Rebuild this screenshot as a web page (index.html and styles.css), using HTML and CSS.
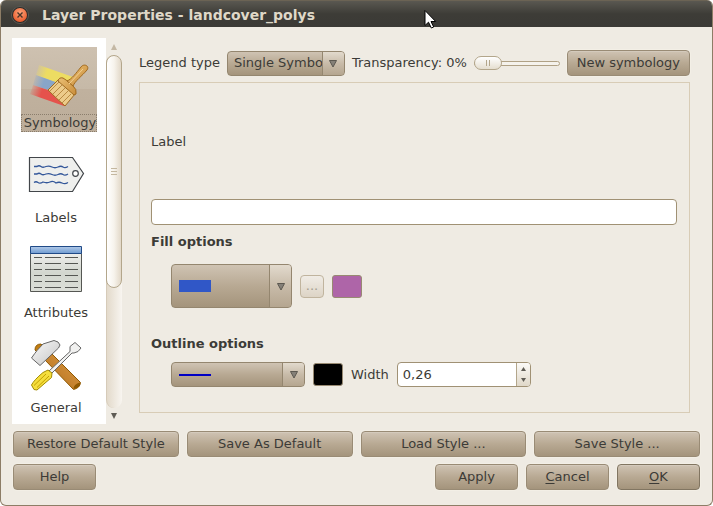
FILE: index.html
```html
<!DOCTYPE html>
<html lang="en">
<head>
<meta charset="utf-8">
<title>Layer Properties - landcover_polys</title>
<link rel="stylesheet" href="styles.css">
</head>
<body>
<div class="window">
  <header class="titlebar">
    <button class="close" type="button" aria-label="Close">
      <svg width="18" height="18" viewBox="0 0 18 18">
        <defs><radialGradient id="orb" cx=".5" cy=".35" r=".6"><stop offset="0" stop-color="#ffa67c"/><stop offset="1" stop-color="#ea5f31"/></radialGradient></defs>
        <circle cx="9" cy="9" r="8.5" fill="#2c2a27" stroke="#5c5a54"/>
        <circle cx="9" cy="9" r="7" fill="url(#orb)"/>
        <path d="M6.500 6.500l5 5m0-5l-5 5" stroke="#4b3528" stroke-width="1.400"/>
      </svg>
    </button>
    <h1>Layer Properties - landcover_polys</h1>
    <svg class="pointer" width="13" height="20" viewBox="0 0 13 20"><path d="M1 1.500v15l3.500-3.300 2.800 5.800 2.400-1-2.700-5.500h4.700z" fill="#fff" stroke="#000"/></svg>
  </header>

  <main class="content">
    <div class="upper">
      <nav class="pages">
        <a class="page selected" href="#symbology">
          <span class="icon">
            <svg width="60" height="60" viewBox="0 0 60 60">
              <defs>
                <linearGradient id="fy" gradientUnits="userSpaceOnUse" x1="7" y1="14" x2="19" y2="18"><stop offset="0" stop-color="#eddc62" stop-opacity="0"/><stop offset="1" stop-color="#eddc62"/></linearGradient>
                <linearGradient id="fb" gradientUnits="userSpaceOnUse" x1="4" y1="24" x2="16" y2="28"><stop offset="0" stop-color="#88a5c8" stop-opacity="0"/><stop offset="1" stop-color="#88a5c8"/></linearGradient>
                <linearGradient id="fr" gradientUnits="userSpaceOnUse" x1="1" y1="36" x2="13" y2="40"><stop offset="0" stop-color="#e5524c" stop-opacity="0"/><stop offset="1" stop-color="#e5524c"/></linearGradient>
                <linearGradient id="wood" x1="0" y1="0" x2="1" y2="1"><stop offset="0" stop-color="#eabf74"/><stop offset="1" stop-color="#c98d3a"/></linearGradient>
              </defs>
              <path d="M10 14l34 12-4 10L7 24z" fill="url(#fy)"/>
              <path d="M7 24l33 12-3 9L4 34z" fill="url(#fb)"/>
              <path d="M4 34l33 11-2 10L1 43z" fill="url(#fr)"/>
              <path d="M19 39L30 28 46 43 36 55Q27 47 19 39z" fill="#eccb8a" stroke="#a06a20"/>
              <path d="M21 40l9-9M24 43l9-9M27 46l9-9M30 49l9-9M33 52l9-9" stroke="#b98a43"/>
              <path d="M29 30q1-4 5-3l6 4 4 4q4 3 3 8l-2 1z" fill="url(#wood)" stroke="#a06a20"/>
              <path d="M38 30c5-2 9-8 14-14 3-4 9-1 6 3-5 6-12 11-14 16z" fill="url(#wood)" stroke="#a06a20"/>
              <path d="M40 33L54 18" stroke="#f2d091"/>
            </svg>
          </span>
          <span class="name">Symbology</span>
        </a>
        <a class="page" href="#labels">
          <span class="icon">
            <svg width="60" height="60" viewBox="0 0 60 60">
              <path d="M3.500 11.500H46.500L57.500 27.500 46.500 45.500H3.500z" fill="#eeefed" stroke="#42464a" stroke-width="1.200"/>
              <circle cx="49.500" cy="27.500" r="2.800" fill="#fff" stroke="#42464a" stroke-width="1.200"/>
              <path d="M8 20.500h3q2-1.500 4 0t5 0q3-1 6 .5t6 0q3-1.500 5 0t5-.5M8 28h3q2-1.500 4 0t5 0q3-1 6 .5t6 0q3-1.500 5 0t5-.5M8 36.500q2-1.500 4 0t5-.5q4 1.500 7 0t6 1q3-1.500 6 0t6-.5" fill="none" stroke="#33579a" stroke-width="1.300"/>
            </svg>
          </span>
          <span class="name">Labels</span>
        </a>
        <a class="page" href="#attributes">
          <span class="icon">
            <svg width="60" height="60" viewBox="0 0 60 60">
              <defs>
                <linearGradient id="sheet" x1="0" y1="0" x2="0" y2="1"><stop offset="0" stop-color="#eeeeec"/><stop offset=".5" stop-color="#d3d7cf"/><stop offset="1" stop-color="#dcdfd8"/></linearGradient>
                <linearGradient id="head" x1="0" y1="0" x2="0" y2="1"><stop offset="0" stop-color="#b2cae8"/><stop offset="1" stop-color="#6f9bd1"/></linearGradient>
              </defs>
              <path d="M4.500 12.500h51v38h-51z" fill="url(#sheet)" stroke="#555753"/>
              <path d="M4.500 5.500h51v7h-51z" fill="url(#head)" stroke="#204a87"/>
              <path d="M8 16.500h8m3 0h16m4 0h13M8 22.500h8m3 0h16m4 0h13M8 28.500h8m3 0h16m4 0h13M8 34.500h8m3 0h16m4 0h13M8 40.500h8m3 0h16m4 0h13M8 46.500h8m3 0h16m4 0h13" stroke="#555753"/>
            </svg>
          </span>
          <span class="name">Attributes</span>
        </a>
        <a class="page" href="#general">
          <span class="icon">
            <svg width="60" height="60" viewBox="0 0 60 60">
              <defs>
                <linearGradient id="shaft" x1="0" y1="1" x2="1" y2="0"><stop offset="0" stop-color="#b36f1c"/><stop offset="1" stop-color="#dc9a45"/></linearGradient>
                <linearGradient id="steel" x1="0" y1="0" x2="1" y2="1"><stop offset="0" stop-color="#fafafa"/><stop offset="1" stop-color="#c4c4c4"/></linearGradient>
              </defs>
              <path d="M9 14q0-6 6-6l3 4-6 5z" fill="#c17d11" stroke="#8f5902"/>
              <path d="M19 24L26 18 54.500 46.500Q54 52 47.500 53.500z" fill="url(#shaft)" stroke="#8f5902"/>
              <path d="M47.500 53q0-5 6.500-6.500 1 5-6.500 6.500z" fill="#8f5902"/>
              <path d="M5.500 22Q9 17 11 14.500L17 8 28 4.500 32 6 34 9 32.500 12 22 22 14 29.500z" fill="url(#steel)" stroke="#666"/>
              <path d="M23 35L44 15.500V10.500L49 6.500 55 12 52 15.500 48 17 46 17 25.500 37.500z" fill="#f1f1f0" stroke="#666"/>
              <path d="M5.500 49Q8 44 17 36.500L22 34 26 37 25.500 41.500 11 54 8 53.500z" fill="#f5de3c" stroke="#a38b00"/>
              <path d="M8 49.500L20 38M11 51.500L23 40" stroke="#c4a000"/>
            </svg>
          </span>
          <span class="name">General</span>
        </a>
      </nav>
      <div class="scrollbar" aria-hidden="true">
        <svg class="up" width="8" height="6" viewBox="0 0 8 6"><path d="M4 0l3 6H1z"/></svg>
        <div class="track"><div class="thumb"><i></i></div></div>
        <svg class="down" width="8" height="6" viewBox="0 0 8 6"><path d="M4 6L1 0h6z"/></svg>
      </div>

      <section class="panel">
        <div class="toolbar">
          <label for="legend">Legend type</label>
          <span class="combo legend">
            <select id="legend"><option>Single Symbol</option></select>
            <span class="drop"><svg width="10" height="9" viewBox="0 0 10 9"><path d="M1.500 1.500h7L5 8z"/></svg></span>
          </span>
          <label for="transparency">Transparency: 0%</label>
          <span class="slider"><input id="transparency" type="range" min="0" max="100" value="0"></span>
          <button class="btn new" type="button">New symbology</button>
        </div>

        <div class="frame">
          <label class="caption" for="label">Label</label>
          <input class="field" id="label" type="text">
          <h2>Fill options</h2>
          <div class="row fill">
            <span class="combo pattern">
              <select aria-label="Fill pattern"><option></option></select>
              <span class="sample brush"></span>
              <span class="drop"><svg width="10" height="9" viewBox="0 0 10 9"><path d="M1.500 1.500h7L5 8z"/></svg></span>
            </span>
            <button class="more" type="button" disabled>...</button>
            <button class="color violet" type="button" aria-label="Fill color"></button>
          </div>
          <h2>Outline options</h2>
          <div class="row">
            <span class="combo stroke">
              <select aria-label="Outline style"><option></option></select>
              <span class="sample pen"></span>
              <span class="drop"><svg width="10" height="9" viewBox="0 0 10 9"><path d="M1.500 1.500h7L5 8z"/></svg></span>
            </span>
            <button class="color black" type="button" aria-label="Outline color"></button>
            <label for="width">Width</label>
            <span class="spin">
              <input id="width" type="text" value="0,26">
              <span class="steps">
                <button type="button" aria-label="Increase"><svg width="5" height="4" viewBox="0 0 5 4"><path d="M2.500 0L5 4H0z"/></svg></button>
                <button type="button" aria-label="Decrease"><svg width="5" height="4" viewBox="0 0 5 4"><path d="M0 0h5L2.500 4z"/></svg></button>
              </span>
            </span>
          </div>
        </div>
      </section>
    </div>

    <div class="styles">
      <button class="btn" type="button">Restore Default Style</button>
      <button class="btn" type="button">Save As Default</button>
      <button class="btn" type="button">Load Style ...</button>
      <button class="btn" type="button">Save Style ...</button>
    </div>
    <footer class="actions">
      <button class="btn help" type="button">Help</button>
      <button class="btn" type="button">Apply</button>
      <button class="btn" type="button"><u>C</u>ancel</button>
      <button class="btn default" type="button"><u>O</u>K</button>
    </footer>
  </main>
</div>
</body>
</html>
```

FILE: styles.css
```css
* {
  box-sizing: border-box;
}

body {
  margin: 0;
  background: #fff;
  color: #3c3b37;
  font: 13px/18px "DejaVu Sans", sans-serif;
}

button, input, select {
  margin: 0;
  color: inherit;
  font: inherit;
}

.window {
  display: flex;
  flex-direction: column;
  min-height: 100vh;
  border: 1px solid #8d7d66;
  border-top: 0;
  border-radius: 6px;
  background: #efebe3;
  overflow: hidden;
}

.titlebar {
  position: relative;
  display: flex;
  align-items: center;
  gap: 13px;
  height: 27px;
  padding: 1px 10px 0;
  border-top: 1px solid #6b6354;
  background: linear-gradient(#5a5851, #3d3c37 50%, #3b3a36);
}

.titlebar h1 {
  margin: 0;
  color: #dfd8c8;
  font-size: 14px;
  line-height: 18px;
}

.close {
  display: flex;
  padding: 0;
  border: 0;
  background: none;
}

.pointer {
  position: absolute;
  left: 423px;
  top: 8px;
}

.content {
  display: flex;
  flex: 1;
  flex-direction: column;
  gap: 7px;
  padding: 11px 12px 15px 11px;
}

.upper {
  display: flex;
  flex: 1;
}

.pages {
  display: flex;
  flex-direction: column;
  align-items: flex-start;
  gap: 10px;
  width: 94px;
  padding: 9px 9px 7px;
  background: #fff;
}

.page {
  min-width: 70px;
  color: inherit;
  text-align: center;
  text-decoration: none;
  white-space: nowrap;
}

.icon {
  display: flex;
  align-items: center;
  justify-content: center;
  height: 67px;
}

.name {
  display: block;
}

.selected {
  width: 76px;
  background: linear-gradient(#cec1b0, #c6b9a7 50%, #c0b19e 50%, #bcad9a);
}

.selected .name {
  padding-left: 2px;
  outline: 1px dotted #8a7d6c;
  outline-offset: -1px;
}

.scrollbar {
  display: flex;
  flex-direction: column;
  align-items: center;
  gap: 5px;
  width: 16px;
  padding: 6px 0 5px;
}

.scrollbar svg {
  fill: #5f5c55;
}

.scrollbar .up {
  fill: #c4b8a4;
}

.track {
  flex: 1;
  width: 16px;
  border-left: 1px solid #d6cbb9;
  border-radius: 8px;
  background: linear-gradient(90deg, #e3dacb, #f8f5f0);
}

.thumb {
  display: flex;
  align-items: center;
  justify-content: center;
  width: 16px;
  height: 66%;
  margin-left: -1px;
  border: 1px solid #b3a68b;
  border-radius: 8px;
  background: linear-gradient(90deg, #fff, #f7f3ec 50%, #e2d8c8);
}

.thumb i {
  width: 6px;
  height: 7px;
  border-top: 1px solid #c4b79f;
  border-bottom: 1px solid #c4b79f;
  background: linear-gradient(#c4b79f, #c4b79f) center / 6px 1px no-repeat;
}

.panel {
  display: flex;
  flex: 1;
  flex-direction: column;
  gap: 6px;
  min-width: 0;
  padding: 12px 10px 11px 17px;
}

.toolbar {
  display: flex;
  align-items: center;
  gap: 7px;
  height: 26px;
  white-space: nowrap;
}

.btn {
  height: 26px;
  padding: 0 8px;
  border: 1px solid #998b75;
  border-radius: 4px;
  background: linear-gradient(#cfc3b3, #b8a993 50%, #a4947c);
  box-shadow: 0 0 0 1px #f3efe6, inset 0 1px #d4cabc;
}

.default {
  border-color: #817561;
}

.combo {
  position: relative;
  display: block;
  flex: none;
}

.combo select {
  display: block;
  width: 100%;
  height: 100%;
  padding: 0 22px 0 6px;
  border: 1px solid #94866f;
  border-radius: 4px;
  background: linear-gradient(#cfc3b3, #b8a993 50%, #a4947c);
  appearance: none;
  text-overflow: clip;
}

.drop {
  position: absolute;
  top: 1px;
  right: 1px;
  bottom: 1px;
  display: flex;
  align-items: center;
  justify-content: center;
  width: 22px;
  border-left: 1px solid #94866f;
  border-radius: 0 3px 3px 0;
  background: linear-gradient(#e2dacd, #c8bba9 50%, #b5a690);
  pointer-events: none;
}

.drop svg {
  fill: #858078;
  stroke: #5c5850;
}

.legend {
  width: 118px;
  height: 25px;
}

.slider {
  display: flex;
  flex: 1;
  min-width: 60px;
}

.slider input {
  width: 100%;
  height: 16px;
  background: none;
  appearance: none;
}

.slider input::-webkit-slider-runnable-track {
  height: 5px;
  border: 1px solid #b0a185;
  border-radius: 3px;
  background: #f5f2ec;
}

.slider input::-webkit-slider-thumb {
  width: 28px;
  height: 14px;
  margin: -6px 0 0 -1px;
  border: 1px solid #b3a68b;
  border-radius: 7px;
  background:
    linear-gradient(#b3a68b, #b3a68b) 11px 3px / 1px 6px no-repeat,
    linear-gradient(#b3a68b, #b3a68b) 14px 3px / 1px 6px no-repeat,
    linear-gradient(#fff, #e5decf);
  appearance: none;
}

.new {
  padding: 0 9px;
}

.frame {
  display: flex;
  flex: 1;
  flex-direction: column;
  padding: 50px 12px 25px 11px;
  border: 1px solid #d8ccb6;
}

.caption {
  margin-bottom: 48px;
}

.field {
  width: 100%;
  height: 26px;
  padding: 0 5px;
  border: 1px solid #a09174;
  border-radius: 4px;
  background: #fff;
}

h2 {
  margin: 8px 0 9px;
  font-size: 13px;
  line-height: 18px;
}

.row {
  display: flex;
  align-items: center;
  gap: 8px;
  padding-left: 20px;
}

.fill {
  margin: 4px 0 19px;
}

.pattern {
  width: 121px;
  height: 44px;
}

.stroke {
  width: 134px;
  height: 25px;
}

.sample {
  position: absolute;
  top: 50%;
  left: 8px;
  width: 32px;
  pointer-events: none;
}

.brush {
  height: 12px;
  margin-top: -6px;
  background: #3057c7;
}

.pen {
  height: 2px;
  margin-top: -1px;
  background: #0000c4;
}

.more {
  width: 24px;
  height: 23px;
  padding: 0;
  border: 1px solid #c0b49e;
  border-radius: 4px;
  background: linear-gradient(#f0ece5, #ddd4c6);
  color: #a39c90;
}

.color {
  width: 30px;
  height: 23px;
  padding: 0;
  border: 1px solid #988a72;
  border-radius: 3px;
}

.violet {
  background: #ae65a8;
}

.black {
  background: #000;
}

.spin {
  display: flex;
  width: 134px;
  height: 25px;
  border: 1px solid #a09174;
  border-radius: 4px;
  background: #fff;
  overflow: hidden;
}

.spin input {
  flex: 1;
  min-width: 0;
  padding: 0 5px;
  border: 0;
  background: none;
}

.steps {
  display: flex;
  flex-direction: column;
  width: 14px;
  border-left: 1px solid #b3a68b;
  background: linear-gradient(#fbfaf7, #e0d8c9);
}

.steps button {
  display: flex;
  flex: 1;
  align-items: center;
  justify-content: center;
  padding: 0;
  border: 0;
  background: none;
}

.steps svg {
  fill: #5f5c55;
}

.styles {
  display: grid;
  grid-template-columns: repeat(4, 1fr);
  gap: 8px;
  padding-left: 1px;
}

.actions {
  display: flex;
  gap: 8px;
  padding-left: 1px;
}

.actions .btn {
  width: 83px;
}

.help {
  margin-right: auto;
}

u {
  text-underline-offset: 2px;
}
```
